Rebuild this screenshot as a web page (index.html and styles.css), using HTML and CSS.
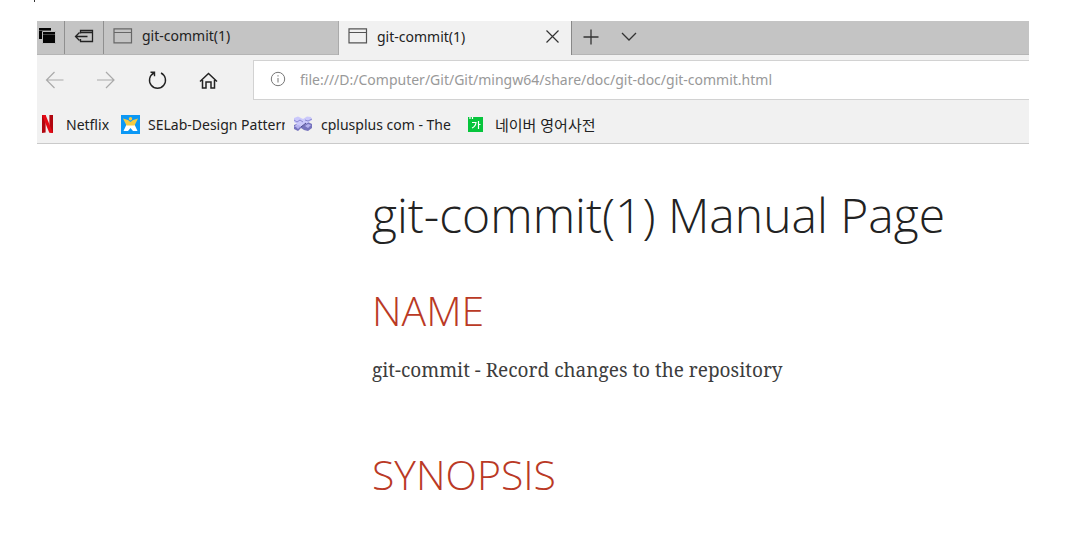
FILE: index.html
```html
<!DOCTYPE html>
<html lang="en">
<head>
<meta charset="utf-8">
<meta name="viewport" content="width=device-width, initial-scale=1">
<title>git-commit(1)</title>
<link rel="stylesheet" href="styles.css">
</head>
<body>
<div class="caret"></div>
<div class="browser">
  <header class="chrome">
    <div class="tab-strip">
      <button class="tool tool-saved" type="button" aria-label="Tabs you've set aside">
        <svg width="20" height="18" viewBox="0 0 20 18"><path d="M2 1h12v11H2z" fill="#050505"/><path d="M2 3.500h12" stroke="#555"/><path d="M5.500 4.500h13v12h-13z" fill="#050505" stroke="#bdbdbd"/><path d="M6 7.500h12" stroke="#444"/></svg>
      </button>
      <button class="tool tool-aside" type="button" aria-label="Set these tabs aside">
        <svg width="20" height="14" viewBox="0 0 20 14" fill="none" stroke="#222" stroke-width="1.300"><path d="M6.500 4.500V1.500h12v11h-12V10M6.500 3.500h12M1.500 7.500h12M5.500 3.500l-4 4 4 4"/></svg>
      </button>
      <div class="tab">
        <svg width="20" height="16" viewBox="0 0 20 16" fill="none" stroke="#666" stroke-width="1.200"><path d="M1 .8h17.500v14H1zM1 4.500h17.500"/></svg>
        <span>git-commit(1)</span>
      </div>
      <div class="tab tab-active">
        <svg width="20" height="16" viewBox="0 0 20 16" fill="none" stroke="#555" stroke-width="1.200"><path d="M1 .8h17.500v14H1zM1 4.500h17.500"/></svg>
        <span>git-commit(1)</span>
        <button class="close" type="button" aria-label="Close tab"><svg width="13" height="13" viewBox="0 0 13 13" fill="none" stroke="#333" stroke-width="1.200"><path d="M.5.500l12 12M12.500.500l-12 12"/></svg></button>
      </div>
      <button class="strip-button" type="button" aria-label="New tab"><svg width="16" height="16" viewBox="0 0 16 16" fill="none" stroke="#333" stroke-width="1.300"><path d="M.5 8h15M8 .5v15"/></svg></button>
      <button class="strip-button" type="button" aria-label="Show tab previews"><svg width="16" height="16" viewBox="0 0 16 16" fill="none" stroke="#333" stroke-width="1.300"><path d="M1 4l7 7 7-7"/></svg></button>
    </div>
    <div class="toolbar">
      <nav class="nav">
        <button type="button" aria-label="Back"><svg width="20" height="20" viewBox="0 0 20 20" fill="none" stroke="#aaa" stroke-width="1.200"><path d="M18.500 10h-17M9.500 2L1.500 10l8 8"/></svg></button>
        <button type="button" aria-label="Forward"><svg width="20" height="20" viewBox="0 0 20 20" fill="none" stroke="#aaa" stroke-width="1.200"><path d="M1 10h17M10 2l8 8-8 8"/></svg></button>
        <button type="button" aria-label="Refresh"><svg width="20" height="20" viewBox="0 0 20 20" fill="none" stroke="#222" stroke-width="1.400"><path d="M14 3a8 8 0 1 1-7 0M3.500 2.200h4v4"/></svg></button>
        <button type="button" aria-label="Home"><svg width="20" height="20" viewBox="0 0 20 20" fill="none" stroke="#222" stroke-width="1.500"><path d="M2 11.500L10.500 3.500l8.500 8M4.500 10v8h3.500v-6h5v6h3.500v-8"/></svg></button>
      </nav>
      <label class="address">
        <svg width="16" height="16" viewBox="0 0 16 16" fill="none" stroke="#777"><circle cx="8" cy="8" r="6.700"/><path d="M8 7v4.500M8 4.200v1.300"/></svg>
        <input type="text" aria-label="Address" value="file:///D:/Computer/Git/Git/mingw64/share/doc/git-doc/git-commit.html">
      </label>
    </div>
    <nav class="favorites">
      <a class="fav fav-netflix" href="#"><svg width="13" height="20" viewBox="0 0 13 20"><path d="M1 1h3.600v17.500L1 19zM8.400 1H12v18l-3.600-.5z" fill="#b1060f"/><path d="M1 1h3.600L12 19l-3.800-.5z" fill="#e50914"/></svg><span>Netflix</span></a>
      <a class="fav fav-selab" href="#"><svg width="19" height="19" viewBox="0 0 19 19"><path d="M0 0h19v19H0z" fill="#0c98f5"/><path d="M5.500 9.500h8l3 6.500h-4.500l-2.500-3-2.500 3H2.500z" fill="#fff"/><path d="M2 3.500l5 1.500 2.500 2L12 5l5-1.500-3.500 7h-8z" fill="#f3cb45"/><circle cx="9.500" cy="3.800" r="1.700" fill="#f3cb45"/></svg><span>SELab-Design Pattern</span></a>
      <a class="fav fav-cpp" href="#"><svg width="20" height="18" viewBox="0 0 20 18"><path d="M1 10l5-2 4 2 5-3 4 2v4l-4 3-4-1-3-2-3 3-4-2z" fill="#7673bd"/><path d="M1 3l4-1.500 3 1.500 2 1 4-2.500 4 .5 1 3-3 2-5 3-4 2-3-1-3 1 3-3-3-2z" fill="#cac8fb"/><path d="M1 5l3 2 3-2 3 2M12 5l3 1 4-2" stroke="#8b88cf" fill="none"/><path d="M2 11l3-1 3 1-3 3M12 11l3-2 3 1-3 3z" fill="#b5b2ee"/><path d="M8 12l5-4" stroke="#4c498b"/></svg><span>cplusplus com - The</span></a>
      <a class="fav fav-naver" href="#" lang="ko"><svg width="15" height="15" viewBox="0 0 15 15" fill="none"><path d="M0 0h15v15H0z" fill="#06c53c"/><path d="M2 0v2M4.500 0v2M4 5.500h4q-.5 4-4 5.500M10.500 4v8M10.500 7.500h2" stroke="#fff" stroke-width="1.200"/></svg><span>네이버 영어사전</span></a>
    </nav>
  </header>
  <main class="page">
    <h1>git-commit(1) Manual Page</h1>
    <h2>NAME</h2>
    <p>git-commit - Record changes to the repository</p>
    <h2>SYNOPSIS</h2>
  </main>
</div>
</body>
</html>
```
FILE: styles.css
```css
* {
  box-sizing: border-box;
}

body {
  margin: 0;
  background: #fff;
  color: #222;
  font-family: "Noto Sans", "Noto Sans CJK KR", sans-serif;
  font-size: 14px;
}

button {
  display: flex;
  align-items: center;
  justify-content: center;
  margin: 0;
  padding: 0;
  border: 0;
  background: none;
}

svg {
  display: block;
  flex: none;
}

.caret {
  position: absolute;
  top: 0;
  left: 34px;
  width: 1px;
  height: 2px;
  background: #333;
}

.browser {
  padding: 21px 57px 0 37px;
}

.chrome {
  border-bottom: 1px solid #cacaca;
  background: #f1f1f1;
}

.tab-strip {
  display: flex;
  height: 34px;
  border-bottom: 1px solid #b5b5b5;
  background: #c4c4c4;
}

.tool {
  padding-bottom: 3px;
  border-right: 1px solid #8f8f8f;
}

.tool-saved {
  width: 28px;
  padding-right: 7px;
}

.tool-aside {
  width: 39px;
}

.tab {
  display: flex;
  align-items: center;
  gap: 9px;
  width: 234px;
  padding: 0 12px 4px 9px;
}

.tab-active {
  height: 34px;
  border-right: 1px solid #888;
  border-left: 1px solid #aaa;
  background: #f1f1f1;
}

.close {
  margin-left: auto;
}

.strip-button {
  width: 38px;
  padding-bottom: 2px;
}

.toolbar {
  display: flex;
  align-items: center;
  height: 50px;
}

.nav {
  display: flex;
  gap: 31px;
  padding: 0 35px 0 8px;
}

.address {
  display: flex;
  flex: 1;
  align-items: center;
  gap: 14px;
  height: 40px;
  padding: 0 0 2px 16px;
  border: 1px solid #d2d2d2;
  border-right: 0;
  background: #fff;
}

.address input {
  flex: 1;
  min-width: 0;
  padding: 0;
  border: 0;
  outline: 0;
  background: none;
  color: #999;
  font: inherit;
}

.favorites {
  display: flex;
  align-items: center;
  height: 38px;
  padding-left: 4px;
}

.fav {
  display: flex;
  align-items: center;
  color: #222;
  text-decoration: none;
  white-space: nowrap;
}

.fav span {
  overflow: hidden;
}

.fav-netflix {
  gap: 12px;
  width: 80px;
}

.fav-selab {
  gap: 8px;
  width: 164px;
}

.fav-cpp {
  gap: 8px;
  width: 159px;
  margin-left: 8px;
}

.fav-naver {
  gap: 12px;
  margin-left: 16px;
  font-size: 15px;
}

.page {
  padding: 36px 0 0 335px;
}

h1,
h2 {
  margin: 0;
  font-family: "Open Sans", sans-serif;
  font-weight: 300;
  white-space: nowrap;
}

h1 {
  font-size: 48px;
  line-height: 70px;
}

h2 {
  margin-top: 32px;
  color: #ba3925;
  font-size: 41px;
  line-height: 56px;
}

p {
  margin: 16px 0 60px;
  color: #3d3d3d;
  font-family: "Noto Serif", "Liberation Serif", serif;
  font-size: 19px;
  line-height: 32px;
  white-space: nowrap;
}
```
